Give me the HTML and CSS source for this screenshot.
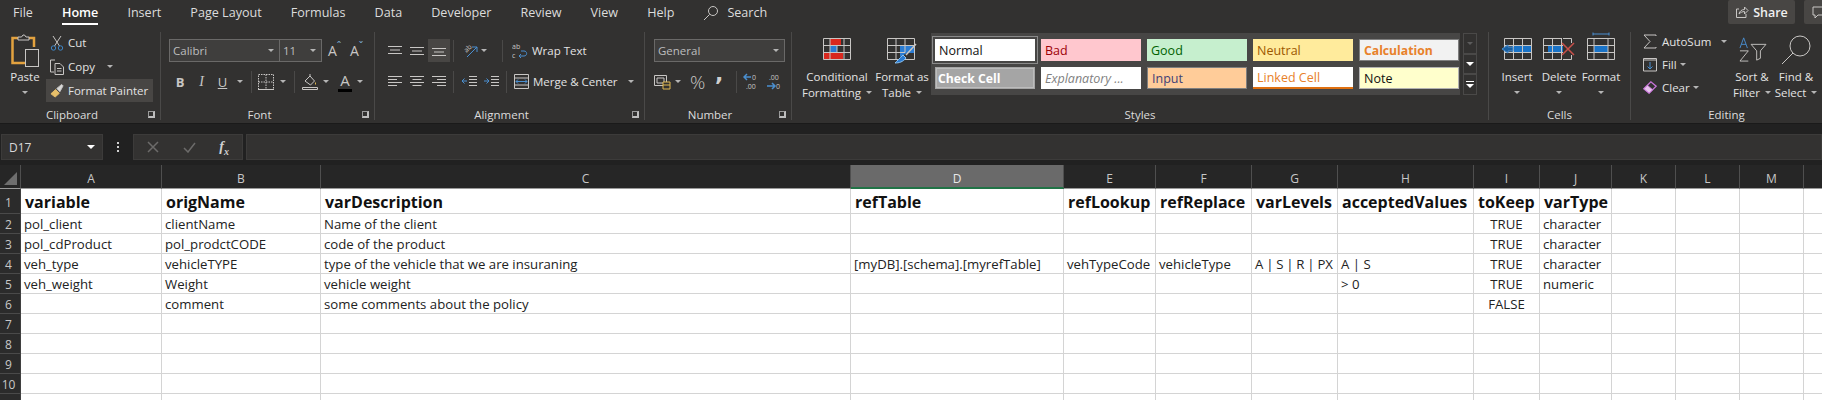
FILE: index.html
```html
<!DOCTYPE html>
<html lang="en">
<head>
  <meta charset="UTF-8" />
  <title>Excel</title>
  <link rel="stylesheet" href="styles.css">
</head>
<body>
  <div class="tabs">
    <span class="tab">File</span>
    <span class="tab active">Home</span>
    <span class="tab">Insert</span>
    <span class="tab">Page Layout</span>
    <span class="tab">Formulas</span>
    <span class="tab">Data</span>
    <span class="tab">Developer</span>
    <span class="tab">Review</span>
    <span class="tab">View</span>
    <span class="tab">Help</span>
    <span class="tab search">
      <svg class="ico" width="16" height="16" viewBox="0 0 16 16"><circle cx="10" cy="6" r="4.500"/><path d="M6.600 9.400 1 15"/></svg>
      Search
    </span>
    <span class="share">
      <svg class="ico" width="14" height="14" viewBox="0 0 14 14"><path d="M4 4H1.500V12.500H11V9"/><path d="M4 9C4.500 6 7 4.500 9.500 4.500V2L13 5.500 9.500 9V6.500C7.500 6.500 5.500 7.500 4 9Z"/></svg>
      Share
    </span>
    <span class="comments">
      <svg class="ico" width="14" height="14" viewBox="0 0 14 14"><path d="M1 2H13V10H6L3 13V10H1Z"/></svg>
    </span>
  </div>

  <div class="ribbon">
    <!-- Clipboard -->
    <div class="group g-clipboard">
      <div class="group-body">
        <div class="big paste">
          <svg class="big-ico paste-ico" width="28" height="33" viewBox="0 0 28 33">
            <path d="M7 4H1.500V29H14" stroke="#e3a23f" stroke-width="2.500"/><path d="M18 4H23V13" stroke="#e3a23f" stroke-width="2.500"/>
            <path d="M7 6V3H10.500L12 1H13.500L15 3H18V6Z"/><rect x="14.500" y="15.500" width="13" height="17" fill="#323130"/>
          </svg>
          <span class="big-line">Paste</span>
          <span class="big-line"><i class="caret"></i></span>
        </div>
        <div class="small-col">
          <div class="small-row">
            <svg class="ico" width="14" height="16" viewBox="0 0 14 16"><path d="M3 1 9.500 11M11 1 4.500 11"/><circle cx="3.500" cy="13" r="2.200" stroke="#3f86c6"/><circle cx="10.500" cy="13" r="2.200" stroke="#3f86c6"/></svg>
            Cut
          </div>
          <div class="small-row">
            <svg class="ico" width="14" height="16" viewBox="0 0 14 16"><path d="M5 1H.500V13H4"/><path d="M5 4.500H10L13.500 8V15.500H5ZM7 9.500H11.500M7 12H11.500"/></svg>
            Copy <i class="caret copy-caret"></i>
          </div>
          <div class="small-row painter">
            <svg class="ico" width="14" height="15" viewBox="0 0 15 15"><path d="M1 11 6 6.500 10 10.500 5.500 14.500Z" fill="#e8c06a" stroke="#e8c06a"/><path d="M7 5.500 12.500 1 14 2.500 10.500 9" fill="#d8d8d8"/></svg>
            Format Painter
          </div>
        </div>
      </div>
      <div class="group-label"><span>Clipboard</span><i class="launcher"></i></div>
    </div>

    <!-- Font -->
    <div class="group g-font">
      <div class="tool-rows">
        <div class="tool-row">
          <span class="combo font-name">Calibri<i class="caret"></i></span>
          <span class="combo font-size">11<i class="caret"></i></span>
          <span class="font-grow">A<sup>ˆ</sup></span>
          <span class="font-grow">A<sup>ˇ</sup></span>
        </div>
        <div class="tool-row">
          <span class="btn w22 bold">B</span>
          <span class="btn w21 ital">I</span>
          <span class="btn w21 und">U</span>
          <i class="caret c13"></i>
          <i class="sep s-a"></i>
          <svg class="ico border-ico" width="16" height="16" viewBox="0 0 16 16"><path d="M.500.500H15.500V15.500H.500ZM8 .500V15.500M.500 8H15.500" stroke-dasharray="1.500 1"/><path d="M0 15.500H16"/></svg>
          <i class="caret c18"></i>
          <i class="sep s-b"></i>
          <svg class="ico fill-ico" width="16" height="17" viewBox="0 0 16 17"><path d="M3 8 8 3 12.500 8 8.500 12Z"/><path d="M8 3V1"/><path d="M13.500 9.500V11.500" stroke="#e0b850"/><path d="M.500 14.500H15.500V16.500H.500Z"/></svg>
          <i class="caret c16"></i>
          <span class="font-color">A</span>
          <i class="caret c16"></i>
        </div>
      </div>
      <div class="group-label"><span>Font</span><i class="launcher"></i></div>
    </div>

    <!-- Alignment -->
    <div class="group g-align">
      <div class="tool-rows">
        <div class="tool-row">
          <span class="btn w22"><svg class="ico" width="14" height="12" viewBox="0 0 14 12"><path d="M0 1.500H14M2 5H12M0 8.500H14"/></svg></span>
          <span class="btn w22"><svg class="ico" width="14" height="12" viewBox="0 0 14 12"><path d="M0 2.500H14M2 6H12M0 9.500H14"/></svg></span>
          <span class="btn w22 on"><svg class="ico" width="14" height="12" viewBox="0 0 14 12"><path d="M0 3.500H14M2 7H12M0 10.500H14"/></svg></span>
          <i class="sep s-c"></i>
          <svg class="ico orient" width="18" height="18" viewBox="0 0 18 18"><text x="2.500" y="9" transform="rotate(-45 6.500 6.500)">ab</text><path d="M6 15 16 5M16 5H11M16 5V10" stroke="#4a8fd0"/></svg>
          <i class="caret c11"></i>
          <i class="sep s-d"></i>
          <svg class="ico wrap-ico" width="16" height="19" viewBox="0 0 16 19"><text x="0" y="7.500">ab</text><text x="0" y="17">c</text><path d="M7 15H12C15.500 15 15.500 10 12 10H9M9 13 7 15 9 17" stroke="#4a8fd0"/></svg>
          <span class="tool-text">Wrap Text</span>
        </div>
        <div class="tool-row">
          <span class="btn w22"><svg class="ico" width="14" height="13" viewBox="0 0 14 13"><path d="M0 1.500H14M0 4.500H9M0 7.500H14M0 10.500H9"/></svg></span>
          <span class="btn w22"><svg class="ico" width="14" height="13" viewBox="0 0 14 13"><path d="M0 1.500H14M2.500 4.500H11.500M0 7.500H14M2.500 10.500H11.500"/></svg></span>
          <span class="btn w22"><svg class="ico" width="14" height="13" viewBox="0 0 14 13"><path d="M0 1.500H14M5 4.500H14M0 7.500H14M5 10.500H14"/></svg></span>
          <i class="sep s-c"></i>
          <svg class="ico ind1" width="15" height="13" viewBox="0 0 15 13"><path d="M7 1.500H15M7 4.500H15M7 7.500H15M7 10.500H15"/><path d="M5 6H0M2.500 3.500 0 6 2.500 8.500" stroke="#4a8fd0"/></svg>
          <svg class="ico ind2" width="15" height="13" viewBox="0 0 15 13"><path d="M7 1.500H15M7 4.500H15M7 7.500H15M7 10.500H15"/><path d="M0 6H5M2.500 3.500 5 6 2.500 8.500" stroke="#4a8fd0"/></svg>
          <i class="sep s-e"></i>
          <svg class="ico merge-ico" width="15" height="15" viewBox="0 0 15 15"><path d="M.500.500H14.500V14.500H.500ZM.500 4H14.500M.500 11H14.500"/><path d="M2 7.500H13M4 5.500 2 7.500 4 9.500M11 5.500 13 7.500 11 9.500" stroke="#4a8fd0"/></svg>
          <span class="tool-text">Merge &amp; Center</span>
          <i class="caret merge-caret"></i>
        </div>
      </div>
      <div class="group-label"><span>Alignment</span><i class="launcher"></i></div>
    </div>

    <!-- Number -->
    <div class="group g-number">
      <div class="tool-rows">
        <div class="tool-row">
          <span class="combo num-format">General<i class="caret"></i></span>
        </div>
        <div class="tool-row">
          <svg class="ico acc-ico" width="17" height="16" viewBox="0 0 17 16"><path d="M.500 1.500H12.500V11.500H.500ZM3 4H10V9H3Z"/><path d="M9 8H16V15H9Z" fill="#323130" stroke="#e0b850"/><path d="M9 11H16" stroke="#e0b850"/></svg>
          <i class="caret c13"></i>
          <span class="percent">%</span>
          <span class="comma">,</span>
          <i class="sep s-f"></i>
          <svg class="ico dec" width="18" height="19" viewBox="0 0 18 19"><path d="M1 5H8M4 2 1 5 4 8" stroke="#4a8fd0" stroke-width="1.500"/><text x="9" y="7.500">0</text><text x="3" y="17">.00</text></svg>
          <svg class="ico dec dec2" width="18" height="19" viewBox="0 0 18 19"><text x="3" y="7.500">.00</text><path d="M1 14H9M6 11 9 14 6 17" stroke="#4a8fd0" stroke-width="1.500"/><text x="10" y="17">0</text></svg>
        </div>
      </div>
      <div class="group-label"><span>Number</span><i class="launcher"></i></div>
    </div>

    <!-- Styles -->
    <div class="group g-styles">
      <div class="group-body">
        <div class="big w74">
          <svg class="big-ico" width="28" height="22" viewBox="0 0 28 22">
            <path d="M7 1H18V7H7ZM1 15H20V21H1Z" fill="#d9281e" stroke="none"/><path d="M7 8H14V14H7Z" fill="#2b7cd3" stroke="none"/>
            <path d="M.500.500H27.500V21.500H.500ZM.500 7.500H27.500M.500 14.500H27.500M7 .500V21.500M14 7.500V14.500M21 .500V21.500"/>
          </svg>
          <span class="big-line">Conditional</span>
          <span class="big-line">Formatting<i class="caret inl"></i></span>
        </div>
        <div class="big w56">
          <svg class="big-ico tbl-ico" width="30" height="26" viewBox="0 0 30 26">
            <path d="M13 8H27V15H20L13 19Z" fill="#2b7cd3" stroke="none"/>
            <path d="M.500.500H27.500V21.500H.500ZM.500 7.500H27.500M.500 14.500H18M9 .500V21.500M18 .500V14.500"/>
            <path d="M29 6 19 17" stroke-width="1.500"/><path d="M8 25C10 23 13 20 16 17L19 20C16 24 12 25 8 25Z" fill="#2b7cd3" stroke="#8cc0ec"/>
          </svg>
          <span class="big-line">Format as</span>
          <span class="big-line">Table<i class="caret inl"></i></span>
        </div>
        <div class="gallery">
          <div class="gallery-cells">
            <span class="st st-normal">Normal</span>
            <span class="st st-bad">Bad</span>
            <span class="st st-good">Good</span>
            <span class="st st-neutral">Neutral</span>
            <span class="st st-calc">Calculation</span>
            <span class="st st-check">Check Cell</span>
            <span class="st st-expl">Explanatory ...</span>
            <span class="st st-input">Input</span>
            <span class="st st-linked">Linked Cell</span>
            <span class="st st-note">Note</span>
          </div>
          <div class="gallery-scroll">
            <span><i class="caret up"></i></span>
            <span><i class="caret white"></i></span>
            <span class="more"><i class="more-bar"></i><i class="caret white"></i></span>
          </div>
        </div>
      </div>
      <div class="group-label"><span>Styles</span></div>
    </div>

    <!-- Cells -->
    <div class="group g-cells">
      <div class="group-body">
        <div class="big w42">
          <svg class="big-ico" width="32" height="22" viewBox="0 0 32 22">
            <path d="M11 8H31V14H11Z" fill="#1a73c7" stroke="none"/>
            <path d="M3.500 .500H30.500V21.500H3.500ZM3.500 7.500H30.500M3.500 14.500H30.500M12.500 .500V21.500M21.500 .500V21.500"/>
            <path d="M12 9H7V7L1 11 7 15V13H12Z" fill="#1a5f9f" stroke="#4a8fd0"/>
          </svg>
          <span class="big-line">Insert</span>
          <span class="big-line"><i class="caret"></i></span>
        </div>
        <div class="big w42">
          <svg class="big-ico" width="32" height="22" viewBox="0 0 32 22">
            <path d="M5 8H20V14H5Z" fill="#1a73c7" stroke="none"/>
            <path d="M19 .500H.500V21.500H19M.500 7.500H20M.500 14.500H20M9.500 .500V21.500M18.500 .500V21.500M20 .500H28.500V5M20 21.500H28.500V17"/>
            <path d="M19 5 31 17M31 5 19 17" stroke="#c9504a" stroke-width="1.500"/>
          </svg>
          <span class="big-line">Delete</span>
          <span class="big-line"><i class="caret"></i></span>
        </div>
        <div class="big w42">
          <svg class="big-ico" width="28" height="28" viewBox="0 0 28 28">
            <path d="M6 2H22M6 .500V3.500M22 .500V3.500" stroke="#4a8fd0"/>
            <path d="M7 13H21V20H7Z" fill="#1a73c7" stroke="none"/>
            <path d="M.500 6.500H27.500V27.500H.500ZM.500 13.500H27.500M.500 20.500H27.500M7 6.500V27.500M21 6.500V27.500"/>
          </svg>
          <span class="big-line">Format</span>
          <span class="big-line"><i class="caret"></i></span>
        </div>
      </div>
      <div class="group-label"><span>Cells</span></div>
    </div>

    <!-- Editing -->
    <div class="group g-editing">
      <div class="group-body">
        <div class="edit-col">
          <div class="edit-row">
            <svg class="ico" width="14" height="15" viewBox="0 0 14 15"><path d="M13 2V1H1L7 7.500 1 14H13V13"/></svg>
            AutoSum <i class="caret sum-caret"></i>
          </div>
          <div class="edit-row">
            <svg class="ico" width="14" height="15" viewBox="0 0 14 15"><path d="M.500 1.500H13.500V14H.500ZM.500 3H13.500"/><path d="M7 5V12M4.500 9.500 7 12 9.500 9.500" stroke="#4a8fd0"/></svg>
            Fill<i class="caret inl"></i>
          </div>
          <div class="edit-row">
            <svg class="ico" width="14" height="15" viewBox="0 0 16 15"><path d="M1 9 9 1 15 6 7 14Z" stroke="#c774d8" stroke-width="1.500"/><path d="M1 9 5 5 11 10 7 14Z" fill="#e6c3ec" stroke="#c774d8"/></svg>
            Clear<i class="caret inl"></i>
          </div>
        </div>
        <div class="big w44">
          <svg class="big-ico sort-ico" width="31" height="26" viewBox="0 0 31 28">
            <path d="M2 13 6 2 10 13M3.500 9H8.500" stroke="#4a8fd0"/>
            <path d="M2 16H11L2 27H11"/><path d="M14 9H30L24 16V24L20 26V16Z"/>
          </svg>
          <span class="big-line">Sort &amp;</span>
          <span class="big-line">Filter<i class="caret inl"></i></span>
        </div>
        <div class="big w44">
          <svg class="big-ico find-ico" width="30" height="30" viewBox="0 0 30 30"><circle cx="19" cy="11" r="10"/><path d="M12 18 1 29"/></svg>
          <span class="big-line">Find &amp;</span>
          <span class="big-line">Select<i class="caret inl"></i></span>
        </div>
      </div>
      <div class="group-label"><span>Editing</span></div>
    </div>
  </div>

  <div class="formula-bar">
    <div class="name-box">D17<i class="caret white"></i></div>
    <div class="fb-dots"><i></i><i></i><i></i></div>
    <div class="fb-buttons">
      <svg class="ico dim" width="12" height="12" viewBox="0 0 12 12"><path d="M1 1 11 11M11 1 1 11" stroke-width="1.500"/></svg>
      <svg class="ico dim" width="13" height="11" viewBox="0 0 13 11"><path d="M1 6 5 10 12 1" stroke-width="1.500"/></svg>
      <span class="fx">f<sub>x</sub></span>
    </div>
    <div class="fb-input"></div>
  </div>

  <table class="sheet">
    <colgroup>
      <col class="c-head"><col class="c-a"><col class="c-b"><col class="c-c"><col class="c-d"><col class="c-e"><col class="c-f"><col class="c-g"><col class="c-h"><col class="c-i"><col class="c-j"><col class="c-k"><col class="c-k"><col class="c-k"><col class="c-k">
    </colgroup>
    <tr class="col-heads">
      <th class="corner"><i></i></th><th>A</th><th>B</th><th>C</th><th class="sel">D</th><th>E</th><th>F</th><th>G</th><th>H</th><th>I</th><th>J</th><th>K</th><th>L</th><th>M</th><th></th>
    </tr>
    <tr class="title-row">
      <th>1</th><td>variable</td><td>origName</td><td>varDescription</td><td>refTable</td><td>refLookup</td><td>refReplace</td><td>varLevels</td><td>acceptedValues</td><td>toKeep</td><td>varType</td><td></td><td></td><td></td><td></td>
    </tr>
    <tr>
      <th>2</th><td>pol_client</td><td>clientName</td><td>Name of the client</td><td></td><td></td><td></td><td></td><td></td><td class="mid">TRUE</td><td>character</td><td></td><td></td><td></td><td></td>
    </tr>
    <tr>
      <th>3</th><td>pol_cdProduct</td><td>pol_prodctCODE</td><td>code of the product</td><td></td><td></td><td></td><td></td><td></td><td class="mid">TRUE</td><td>character</td><td></td><td></td><td></td><td></td>
    </tr>
    <tr>
      <th>4</th><td>veh_type</td><td>vehicleTYPE</td><td>type of the vehicle that we are insuraning</td><td>[myDB].[schema].[myrefTable]</td><td>vehTypeCode</td><td>vehicleType</td><td class="tight">A | S | R | PX</td><td>A | S</td><td class="mid">TRUE</td><td>character</td><td></td><td></td><td></td><td></td>
    </tr>
    <tr>
      <th>5</th><td>veh_weight</td><td>Weight</td><td>vehicle weight</td><td></td><td></td><td></td><td></td><td>&gt; 0</td><td class="mid">TRUE</td><td>numeric</td><td></td><td></td><td></td><td></td>
    </tr>
    <tr>
      <th>6</th><td></td><td>comment</td><td>some comments about the policy</td><td></td><td></td><td></td><td></td><td></td><td class="mid">FALSE</td><td></td><td></td><td></td><td></td><td></td>
    </tr>
    <tr><th>7</th><td></td><td></td><td></td><td></td><td></td><td></td><td></td><td></td><td></td><td></td><td></td><td></td><td></td><td></td></tr>
    <tr><th>8</th><td></td><td></td><td></td><td></td><td></td><td></td><td></td><td></td><td></td><td></td><td></td><td></td><td></td><td></td></tr>
    <tr><th>9</th><td></td><td></td><td></td><td></td><td></td><td></td><td></td><td></td><td></td><td></td><td></td><td></td><td></td><td></td></tr>
    <tr><th>10</th><td></td><td></td><td></td><td></td><td></td><td></td><td></td><td></td><td></td><td></td><td></td><td></td><td></td><td></td></tr>
    <tr><th></th><td></td><td></td><td></td><td></td><td></td><td></td><td></td><td></td><td></td><td></td><td></td><td></td><td></td><td></td></tr>
  </table>
</body>
</html>
```

FILE: styles.css
```css
* {
  box-sizing: border-box;
}

html, body {
  margin: 0;
  height: 400px;
  overflow: hidden;
}

body {
  width: 1822px;
  background: #212121;
  color: #e3e3e3;
  font-family: "Open Sans", "Noto Sans", sans-serif;
  font-size: 11.5px;
}

i {
  font-style: normal;
}

svg {
  fill: none;
  stroke: #c8c6c4;
  flex: none;
}

svg text {
  fill: #c8c6c4;
  stroke: none;
  font-size: 7px;
}

/* tabs */
.tabs {
  display: flex;
  height: 30px;
  padding-left: 13px;
  gap: 29px;
  background: #323130;
  font-size: 12.6px;
  color: #dcdcdc;
  overflow: hidden;
}

.tab {
  line-height: 25px;
  height: 25px;
  position: relative;
}

.tab.active {
  font-weight: 600;
  color: #fff;
}

.tab.active::after {
  content: "";
  position: absolute;
  left: 0;
  right: 0;
  bottom: 0;
  height: 2px;
  background: #fff;
}

.search {
  display: flex;
  align-items: center;
  gap: 8px;
}

.share {
  display: flex;
  align-items: center;
  justify-content: center;
  gap: 4px;
  width: 67px;
  height: 24px;
  margin-left: auto;
  background: #484644;
  border-radius: 2px;
  font-weight: 600;
  color: #f0f0f0;
  font-size: 12.5px;
}

.comments {
  display: flex;
  align-items: center;
  justify-content: center;
  width: 30px;
  height: 24px;
  margin-left: -20px;
  margin-right: -12px;
  background: #484644;
  border-radius: 2px;
}

/* ribbon */
.ribbon {
  display: flex;
  height: 94px;
  padding: 2px 0 3px;
  background: #323130;
  border-bottom: 1px solid #1a1a1a;
}

.group {
  display: flex;
  flex-direction: column;
  border-right: 1px solid #4a4948;
}

.g-clipboard { width: 161px; }
.g-font { width: 214px; }
.g-align { width: 270px; }
.g-number { width: 147px; }
.g-styles { width: 697px; }
.g-cells { width: 142px; }
.g-editing { width: 191px; border-right: none; }

.group-body {
  display: flex;
  flex: none;
  height: 75px;
}

.g-styles .group-body { padding-left: 8px; }
.g-cells .group-body { padding-left: 7px; }

.tool-rows {
  display: flex;
  flex-direction: column;
  flex: none;
  gap: 8px;
  height: 75px;
  padding-top: 7px;
}

.group-label {
  display: flex;
  align-items: center;
  flex: none;
  height: 11px;
  margin-top: 2px;
  color: #dcdcdc;
  white-space: nowrap;
}

.group-label span {
  flex: 1;
  text-align: center;
}

.launcher {
  width: 7px;
  height: 7px;
  margin: 0 5px 0 4px;
  border-left: 1px solid #9a9a9a;
  border-top: 1px solid #9a9a9a;
  border-right: 2px solid #bdbdbd;
  border-bottom: 2px solid #bdbdbd;
}

.caret {
  display: inline-block;
  width: 0;
  height: 0;
  border-left: 3px solid transparent;
  border-right: 3px solid transparent;
  border-top: 3px solid #b5b5b5;
  flex: none;
}

.caret.white {
  border-top-color: #fff;
  border-left-width: 4px;
  border-right-width: 4px;
  border-top-width: 4px;
}

.caret.up {
  border-top-color: #5c5c5c;
}

.caret.inl {
  margin-left: 5px;
  vertical-align: middle;
}

.big {
  display: flex;
  flex-direction: column;
  align-items: center;
  white-space: nowrap;
  flex: none;
  padding-bottom: 7px;
}

.big-ico {
  margin-top: auto;
  margin-bottom: 8px;
}

.paste-ico { margin-top: 2px; margin-bottom: 1px; }
.tbl-ico { margin-bottom: 4px; }
.sort-ico { margin-bottom: 6px; }
.find-ico { margin-bottom: 3px; }

.big-line {
  display: flex;
  align-items: center;
  justify-content: center;
  height: 16px;
  flex: none;
}

.w42 { width: 42px; }
.w44 { width: 44px; }
.w56 { width: 56px; }
.w74 { width: 74px; }

/* clipboard */
.paste {
  width: 46px;
  padding-left: 4px;
}

.small-col {
  display: flex;
  flex-direction: column;
  margin-top: -1px;
}

.small-row {
  display: flex;
  align-items: center;
  gap: 4px;
  width: 107px;
  height: 23px;
  margin-bottom: 1px;
  padding-left: 4px;
  white-space: nowrap;
}

.copy-caret {
  margin-left: 8px;
}

.painter {
  background: #484644;
}

/* combos and small tools */
.tool-row {
  display: flex;
  align-items: center;
  height: 23px;
  white-space: nowrap;
}

.g-font .tool-rows { padding-left: 8px; }
.g-align .tool-rows { padding-left: 9px; }
.g-number .tool-rows { padding-left: 9px; }

.combo {
  display: flex;
  align-items: center;
  justify-content: space-between;
  height: 23px;
  padding: 0 5px 0 3px;
  background: #3f3e3d;
  border: 1px solid #6a6968;
  color: #bdbdbd;
}

.font-name { width: 111px; }
.font-size { width: 43px; margin-left: -1px; margin-right: 6px; }
.num-format { width: 131px; }

.font-grow {
  width: 22px;
  font-size: 14px;
  color: #c8c6c4;
}

.font-grow sup {
  font-size: 11px;
  color: #7aa7d0;
  line-height: 0;
}

.btn {
  display: flex;
  align-items: center;
  justify-content: center;
  height: 23px;
  color: #c8c6c4;
  flex: none;
}

.btn.on { background: #484644; }
.w22 { width: 22px; }
.w21 { width: 21px; }

.bold { font-weight: 700; font-size: 13px; }
.ital { font-style: italic; font-family: "Liberation Serif", serif; font-size: 14px; }
.und { text-decoration: underline; font-size: 13px; }

.c11 { margin: 0 3px 0 2px; }
.c13 { margin: 0 3px 0 4px; }
.c16 { margin: 0 5px; }
.c18 { margin: 0 6px; }

.sep {
  width: 1px;
  height: 22px;
  background: #4a4948;
  flex: none;
}

.s-a { margin: 0 6px 0 5px; }
.s-b { margin: 0 7px 0 2px; }
.s-c { margin: 0 6px 0 3px; }
.s-d { margin: 0 9px 0 12px; }
.s-e { margin: 0 7px; }
.s-f { margin: 0 6px 0 9px; }

.font-color {
  width: 14px;
  margin-left: 4px;
  text-align: center;
  font-size: 15px;
  line-height: 17px;
  color: #c8c6c4;
  border-bottom: 3px solid #000;
}

.ind1 { margin-left: 2px; }
.ind2 { margin-left: 7px; }

.orient { margin-left: 1px; }

.tool-text {
  margin-left: 4px;
  font-size: 11.5px;
}

.merge-caret {
  margin-left: 10px;
}

.percent {
  width: 17px;
  margin-left: 6px;
  font-size: 19px;
  font-weight: 300;
  color: #c8c6c4;
}

.comma {
  width: 12px;
  margin-left: 8px;
  font-family: "DejaVu Sans", sans-serif;
  font-size: 22px;
  font-weight: 700;
  line-height: 12px;
  color: #d0d0d0;
  transform: translateY(-8px);
}

.dec2 {
  margin-left: 5px;
}

/* styles gallery */
.gallery {
  display: flex;
  gap: 3px;
  height: 62px;
  margin-top: 1px;
  margin-left: 1px;
}

.gallery-cells {
  display: grid;
  grid-template-columns: repeat(5, 100px);
  grid-template-rows: 22px 22px;
  column-gap: 6px;
  row-gap: 6px;
  width: 529px;
  padding: 6px 1px 6px 4px;
  background: #474645;
}

.st {
  display: flex;
  align-items: center;
  padding-left: 4px;
  font-size: 12.5px;
  white-space: nowrap;
  overflow: hidden;
}

.st-normal { background: #fff; color: #111; outline: 1px solid #8a8a8a; outline-offset: 2px; }
.st-bad { background: #ffc7ce; color: #9c0006; }
.st-good { background: #c6efce; color: #006100; }
.st-neutral { background: #ffeb9c; color: #9c5700; }
.st-calc { background: #f2f2f2; color: #e8812a; font-weight: 700; font-size: 12.2px; border: 1px solid #7f7f7f; }
.st-check { background: #a5a5a5; color: #fff; font-weight: 700; font-size: 12.2px; border: 1px solid #a5a5a5; outline: 1px solid #bcbcbc; outline-offset: -2px; padding-left: 2px; }
.st-expl { background: #fff; color: #7f7f7f; font-style: italic; }
.st-input { background: #fc9; color: #3f3f76; border: 1px solid #7f7f7f; }
.st-linked { background: #fff; color: #e8812a; border-bottom: 2px solid #e07010; }
.st-note { background: #ffc; color: #111; border: 1px solid #b2b2b2; }

.gallery-scroll {
  display: flex;
  flex-direction: column;
  width: 14px;
}

.gallery-scroll span {
  display: flex;
  flex-direction: column;
  align-items: center;
  justify-content: center;
  gap: 2px;
  height: 21px;
  border: 1px solid #4a4948;
}

.more-bar {
  width: 8px;
  height: 1px;
  background: #fff;
}

/* editing */
.edit-col {
  display: flex;
  flex-direction: column;
  width: 99px;
  margin-top: -2px;
  padding-left: 12px;
  gap: 1px;
  flex: none;
}

.edit-row {
  display: flex;
  align-items: center;
  gap: 5px;
  height: 22px;
  white-space: nowrap;
}

.edit-row .caret.inl {
  margin-left: -2px;
}

.sum-caret {
  margin-left: 5px;
}

/* formula bar */
.formula-bar {
  display: flex;
  height: 41px;
  padding: 10px 0 5px 1px;
  background: #212121;
}

.name-box {
  display: flex;
  align-items: center;
  justify-content: space-between;
  width: 102px;
  padding: 0 7px 0 7px;
  background: #333231;
  border: 1px solid #3c3b3a;
  font-size: 12px;
  color: #d8d8d8;
}

.fb-dots {
  display: flex;
  flex-direction: column;
  align-items: center;
  justify-content: center;
  gap: 2px;
  width: 30px;
}

.fb-dots i {
  width: 2px;
  height: 2px;
  background: #d0d0d0;
}

.fb-buttons {
  display: flex;
  align-items: center;
  justify-content: space-between;
  width: 110px;
  padding: 0 13px 0 13px;
  background: #333231;
  border: 1px solid #3c3b3a;
}

.dim {
  stroke: #6c6b6a;
}

.fx {
  font-family: "Liberation Serif", serif;
  font-style: italic;
  font-weight: 700;
  font-size: 14px;
  color: #d0d0d0;
}

.fx sub {
  font-size: 10px;
  line-height: 0;
}

.fb-input {
  flex: 1;
  margin-left: 3px;
  background: #333231;
  border: 1px solid #3c3b3a;
}

/* sheet */
.sheet {
  border-collapse: separate;
  border-spacing: 0;
  table-layout: fixed;
  width: 1840px;
}

.c-head { width: 21px; }
.c-a { width: 141px; }
.c-b { width: 159px; }
.c-c { width: 530px; }
.c-d { width: 213px; }
.c-e { width: 92px; }
.c-f { width: 96px; }
.c-g { width: 86px; }
.c-h { width: 136px; }
.c-i { width: 66px; }
.c-j { width: 72px; }
.c-k { width: 64px; }

.sheet tr {
  height: 20px;
}

.sheet th {
  padding: 2px 3px 0 0;
  background: #2b2b2b;
  color: #c8c8c8;
  font-size: 12px;
  font-weight: 400;
  text-align: center;
  border-right: 1px solid #3f3f3f;
  border-bottom: 1px solid #4a4a4a;
}

.sheet td {
  height: 20px;
  padding: 2px 0 0 3px;
  background: #fff;
  color: #222;
  font-size: 13.2px;
  line-height: 17px;
  white-space: nowrap;
  overflow: hidden;
  border-right: 1px solid #d4d4d4;
  border-bottom: 1px solid #d4d4d4;
}

.sheet .col-heads {
  height: 24px;
}

.sheet .col-heads th {
  padding: 4px 0 0;
  background: #262626;
  border-right: 1px solid #4f4f4f;
  border-bottom: 1px solid #9a9a9a;
}

.sheet .col-heads .sel {
  background: #6a6a6a;
  color: #e8e8e8;
  border-bottom: 2px solid #217346;
}

.corner {
  position: relative;
}

.corner i {
  position: absolute;
  right: 3px;
  bottom: 3px;
  border-left: 13px solid transparent;
  border-bottom: 13px solid #6e6e6e;
}

.sheet .title-row {
  height: 25px;
}

.sheet .title-row td {
  height: 25px;
  padding-left: 4px;
  font-size: 16px;
  font-weight: 700;
  color: #111;
}

.sheet td.mid {
  padding-left: 0;
  text-align: center;
}

.sheet td.tight {
  word-spacing: -0.6px;
}
```
